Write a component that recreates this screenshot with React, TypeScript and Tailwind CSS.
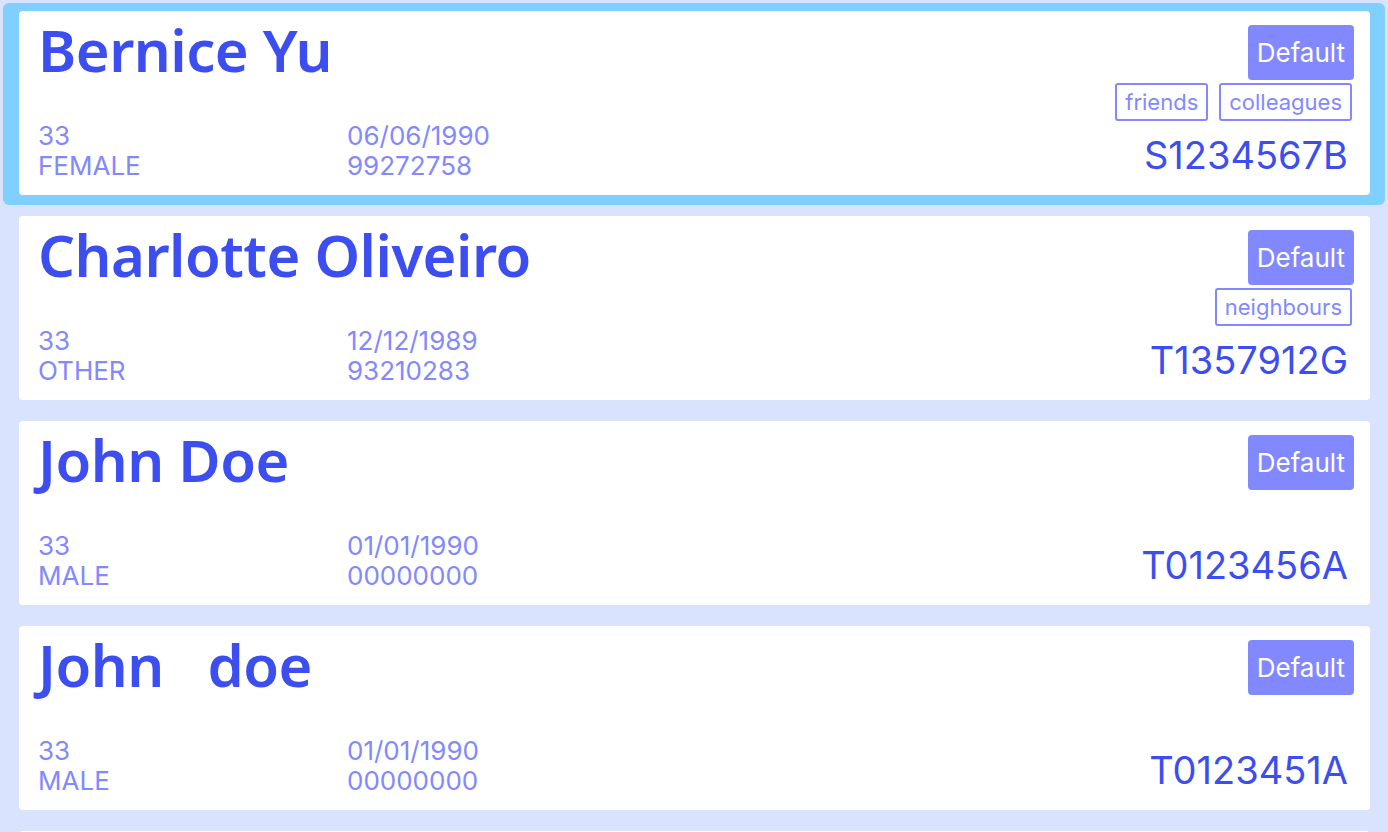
import React from 'react';

type Person = {
  name: string;
  age: string;
  gender: string;
  dob: string;
  phone: string;
  nric: string;
  tags: string[];
};

const people: Person[] = [
  { name: 'Bernice Yu', age: '33', gender: 'FEMALE', dob: '06/06/1990', phone: '99272758', nric: 'S1234567B', tags: ['friends', 'colleagues'] },
  { name: 'Charlotte Oliveiro', age: '33', gender: 'OTHER', dob: '12/12/1989', phone: '93210283', nric: 'T1357912G', tags: ['neighbours'] },
  { name: 'John Doe', age: '33', gender: 'MALE', dob: '01/01/1990', phone: '00000000', nric: 'T0123456A', tags: [] },
  { name: 'John   doe', age: '33', gender: 'MALE', dob: '01/01/1990', phone: '00000000', nric: 'T0123451A', tags: [] },
  { name: 'David Li', age: '33', gender: 'MALE', dob: '02/02/1990', phone: '91031282', nric: 'S7654321C', tags: ['family'] },
];

function PersonCard({ person, selected }: { person: Person; selected: boolean }) {
  return (
    <div className="h-[205px] shrink-0 pt-[3px] px-[3px]">
      <div className={`h-[202px] rounded-md pt-2 pl-4 pr-[15px] pb-[10px] ${selected ? 'bg-[#7fcfff]' : ''}`}>
        <div className="h-[184px] rounded-[4px] bg-white flex justify-between pl-[19px] pr-4 pt-[14px] pb-[14px]">
          <div className="flex flex-col justify-between">
            <div
              className="whitespace-pre text-[58px] leading-[56px] font-semibold tracking-[-0.5px] text-[#3d4ef0] -mt-[3px]"
              style={{ fontFamily: '"Noto Sans", sans-serif' }}
            >
              {person.name}
            </div>
            <div className="grid grid-cols-[309px_1fr] text-[26px] leading-[30px] text-[#8289ff]">
              <div>{person.age}</div>
              <div>{person.dob}</div>
              <div>{person.gender}</div>
              <div>{person.phone}</div>
            </div>
          </div>
          <div className="flex flex-col items-end">
            <div className="h-[55px] px-[9px] rounded-[4px] bg-[#8289ff] text-white text-[26px] flex items-center">
              Default
            </div>
            <div className="flex gap-[11px] mt-[3px] mr-[2px]">
              {person.tags.map((t) => (
                <span key={t} className="h-[38px] px-[8px] border-2 border-[#8289ff] rounded-[3px] text-[22px] text-[#8289ff] flex items-center bg-white">
                  {t}
                </span>
              ))}
            </div>
            <div className="mt-auto mb-[3px] text-[38px] leading-[46px] text-[#3d4ef0] pr-[6px]">{person.nric}</div>
          </div>
        </div>
      </div>
    </div>
  );
}

export default function App() {
  return (
    <div
      className="h-[832px] w-[1388px] overflow-hidden bg-[#d9e3fe] flex flex-col"
      style={{ fontFamily: 'Inter, "Noto Sans", sans-serif' }}
    >
      {people.map((p, i) => (
        <PersonCard key={i} person={p} selected={i === 0} />
      ))}
    </div>
  );
}
